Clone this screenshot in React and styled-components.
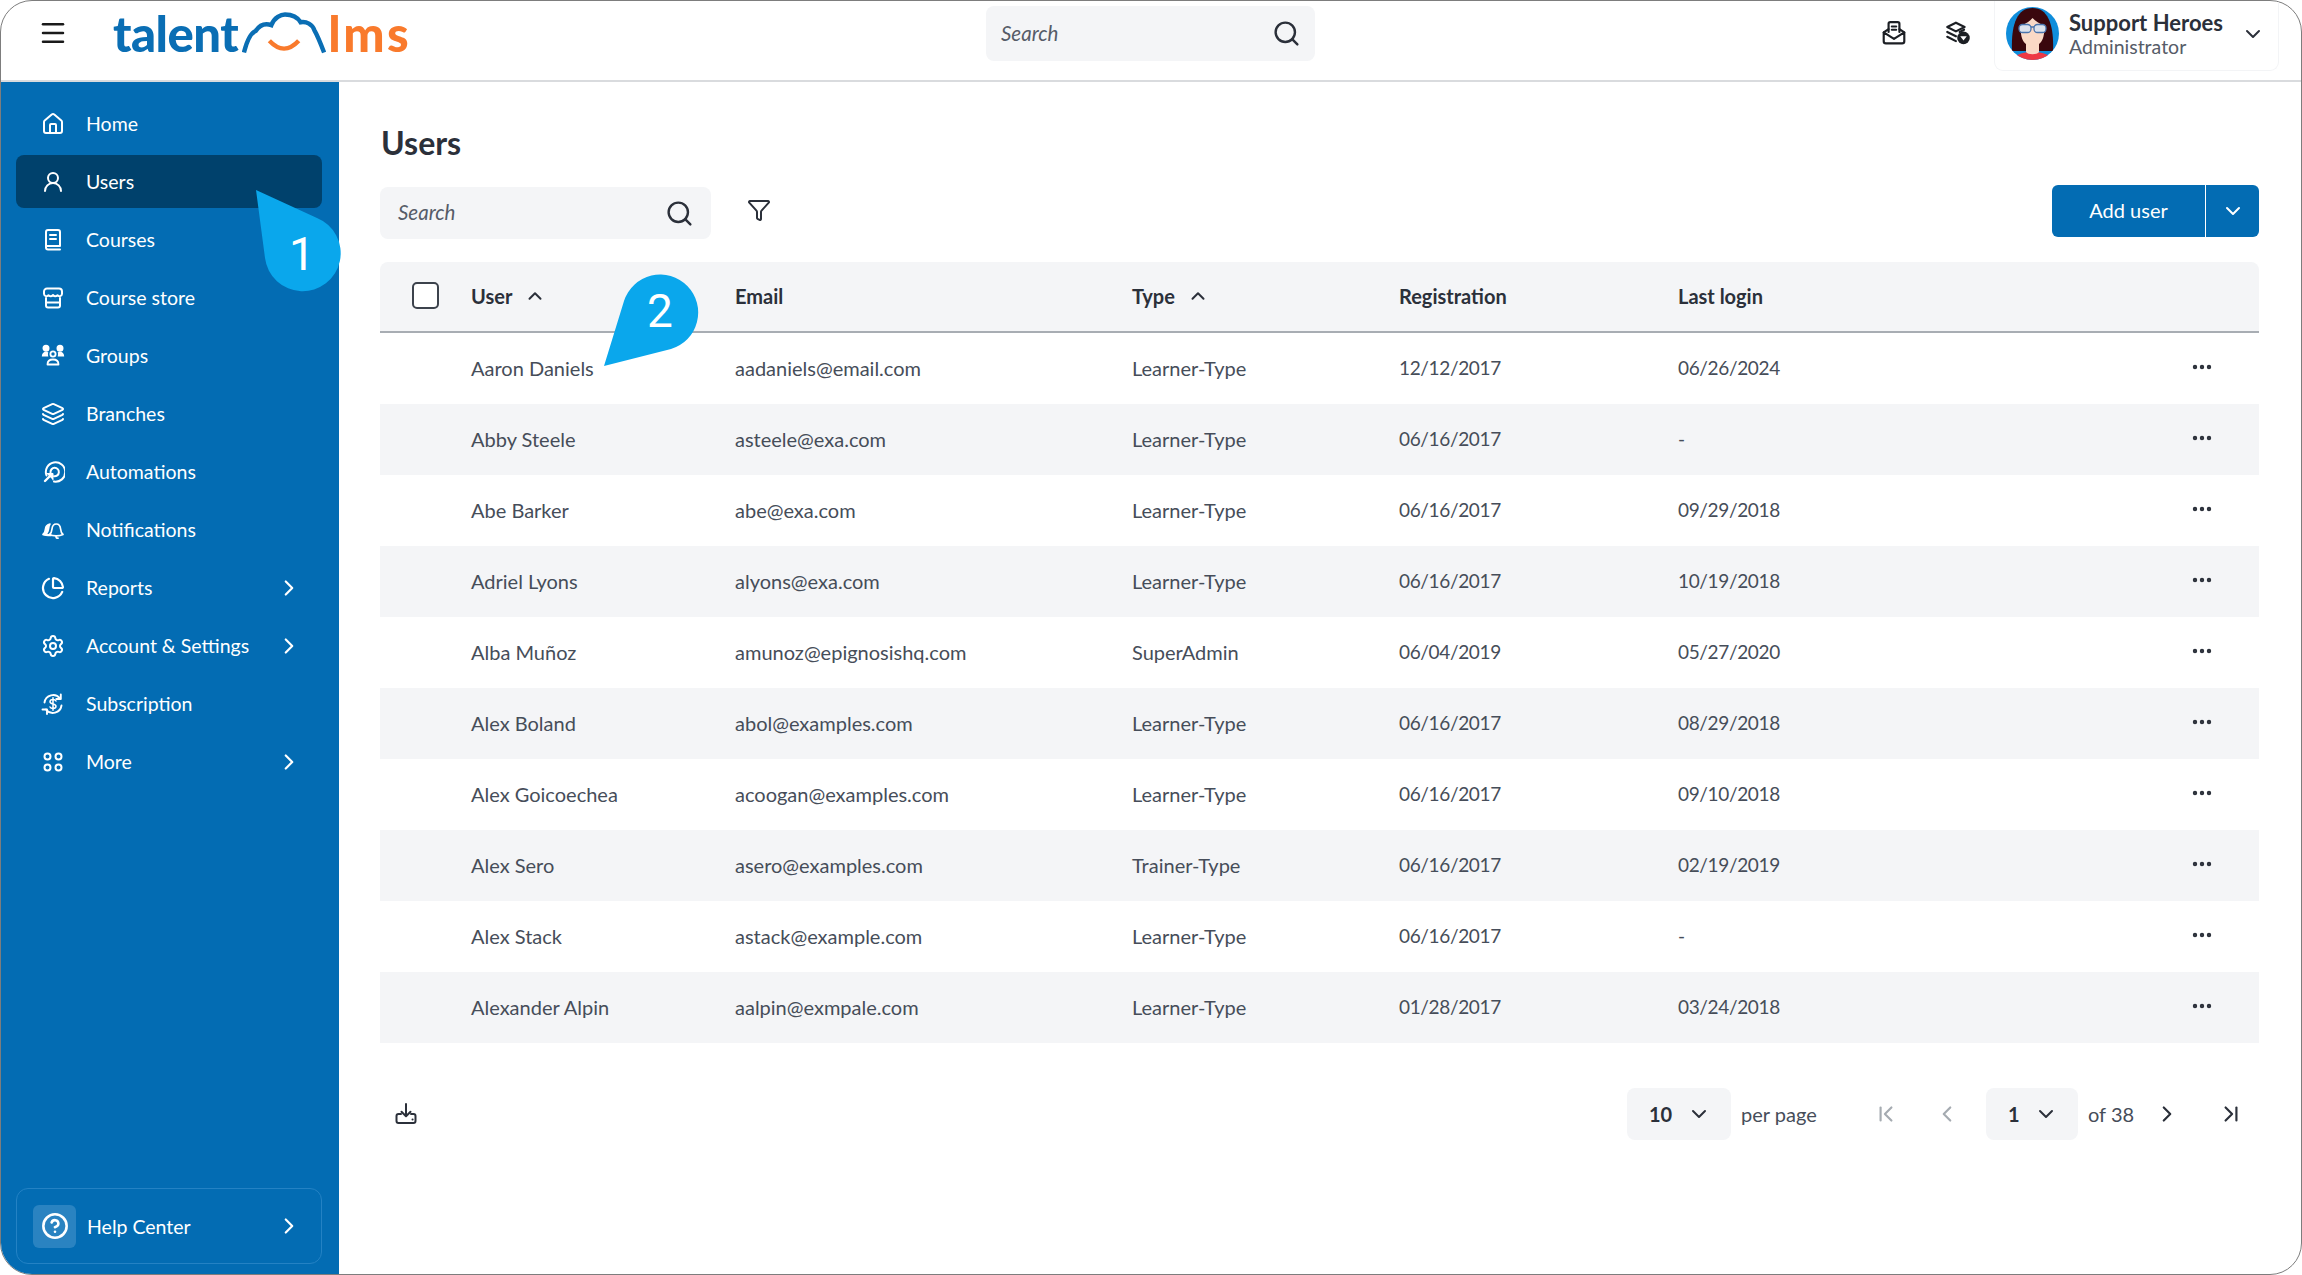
import React from "react";
import styled, { createGlobalStyle } from "styled-components";
import {
  Menu,
  House,
  UserRound,
  Layers,
  ChartPie,
  Settings,
  CircleHelp,
  ChevronRight,
  ChevronDown,
  ChevronUp,
  ChevronFirst,
  ChevronLast,
  ChevronLeft,
  Search,
  Funnel,
  Ellipsis,
} from "lucide-react";

const GlobalStyle = createGlobalStyle`
  html, body {
    margin: 0;
    background: #fff;
  }
  body {
    font-family: "Lato", "Open Sans", sans-serif;
    color: #464d59;
  }
  * {
    box-sizing: border-box;
  }
`;

const BLUE = "#036cb3";
const GREY = "#f4f5f7";
const INK = "#2b303a";

const Svg = ({ size = 24, children, ...rest }) => (
  <svg
    width={size}
    height={size}
    viewBox="0 0 24 24"
    fill="none"
    stroke="currentColor"
    strokeWidth="2"
    strokeLinecap="round"
    strokeLinejoin="round"
    {...rest}
  >
    {children}
  </svg>
);

const BookIcon = () => (
  <Svg>
    <path d="M5 18V4a2 2 0 0 1 2-2h10a2 2 0 0 1 2 2v14z" />
    <path d="M5 18v1.5A2 2 0 0 0 7 21.5h12" />
    <path d="M9 7h6M9 11h6" />
  </Svg>
);

const StoreIcon = () => (
  <Svg>
    <path d="M6 2.5h12a3 3 0 0 1 3 3V8a2.5 2.5 0 0 1-4.5 1.2A3.2 3.2 0 0 1 12 9a3.2 3.2 0 0 1-4.5.2A2.5 2.5 0 0 1 3 8V5.500a3 3 0 0 1 3-3z" />
    <path d="M5 12v7.500a2 2 0 0 0 2 2h10a2 2 0 0 0 2-2V12M5 16.500h14" />
  </Svg>
);

const GroupsIcon = () => (
  <Svg size={27} strokeWidth="1.8">
    <circle cx="12" cy="10.500" r="2.600" />
    <path d="M6.500 21c0-3 2-5 5.500-5s5.500 2 5.500 5z" />
    <circle cx="5" cy="4.800" r="2.600" fill="currentColor" />
    <circle cx="19" cy="4.800" r="2.600" fill="currentColor" />
    <path d="M0.800 13c0-3 1.800-4.800 4.200-4.800 1.200 0 1.800.3 2.300.6-.5 1.200-.4 2.500 0 4.200zM23.200 13c0-3-1.800-4.800-4.200-4.800-1.200 0-1.800.3-2.300.6.5 1.200.4 2.500 0 4.200z" fill="currentColor" stroke="none" />
  </Svg>
);

const AutomationIcon = () => (
  <Svg>
    <path d="M5.500 15.500A9.700 9.700 0 1 1 13 21.600" />
    <path d="M9.500 12.500A4.200 4.200 0 1 1 13 16.200" />
    <path d="M4 21l7-7" strokeWidth="2.400" />
    <path d="M5.500 13.500h6.500V20" fill="currentColor" strokeWidth="1" />
  </Svg>
);

const NotifyIcon = () => (
  <Svg strokeWidth="1.700">
    <path d="M10 17.500c-3 0-6.500-.3-8-1 1.800-1.500 2.300-3 2.500-5.500.2-2.500 1.800-4.500 4.500-5-1.200 1.500-1.300 3-1.500 5-.2 2.500-1.500 4.200-2.500 5z" fill="currentColor" />
    <path d="M8.500 16.500c1.800-1.400 2.300-3 2.500-5.500.3-3 2-5 4.300-5s4 2 4.300 5c.2 2.500.7 4.100 2.400 5.500-2 1-4.500 1.300-6.700 1.300s-4.800-.3-6.800-1.300z" />
    <path d="M15 18.500c0 1 .8 1.700 2 1.700" />
  </Svg>
);

const SubscriptionIcon = () => (
  <Svg strokeWidth="1.900">
    <path d="M3.500 10.500A8.700 8.700 0 0 1 19 6.500" />
    <path d="M20.500 13.500A8.700 8.700 0 0 1 5 17.500" />
    <path d="M19.800 2.500v4.500h-4.500M1.500 17.500h4.500V22" />
    <path d="M15 9c-.5-1-1.500-1.500-3-1.500-1.700 0-3 .8-3 2.200 0 3 6 1.600 6 4.600 0 1.400-1.300 2.200-3 2.200-1.500 0-2.500-.5-3-1.500M12 5.800v12.400" strokeWidth="1.500" />
  </Svg>
);

const MoreIcon = () => (
  <Svg>
    <circle cx="6.500" cy="6.500" r="3" />
    <circle cx="17.500" cy="6.500" r="3" />
    <circle cx="6.500" cy="17.500" r="3" />
    <circle cx="17.500" cy="17.500" r="3" />
  </Svg>
);

const InboxIcon = () => (
  <Svg size={26}>
    <path d="M7 11V3.500A1.500 1.500 0 0 1 8.500 2h7A1.500 1.500 0 0 1 17 3.500V11" />
    <path d="M10 6h4M10 9h4" />
    <path d="M2.500 11.500v8A2 2 0 0 0 4.500 21.500h15a2 2 0 0 0 2-2v-8l-9.500 6z" />
    <path d="M2.500 11.500L7 8.500M21.500 11.500L17 8.500" />
  </Svg>
);

const BranchShieldIcon = () => (
  <Svg size={26}>
    <path d="M11 2.500l8 4-8 4-8-4z" />
    <path d="M3 11l8 4M3 15.500l8 4" />
    <path d="M14.500 11l4-2" />
    <circle cx="18" cy="16.500" r="5.800" fill="currentColor" stroke="none" />
    <path d="M15 15h6l-3 4z" fill="#fff" stroke="none" />
  </Svg>
);

const DownloadIcon = () => (
  <Svg>
    <path d="M12 2v12M7.500 9.800L12 14.300l4.500-4.500" />
    <path d="M7 12H4.500A2 2 0 0 0 2.500 14v5a2 2 0 0 0 2 2h15a2 2 0 0 0 2-2v-5a2 2 0 0 0-2-2H17" />
    <path d="M18.500 17.500h.1" />
  </Svg>
);

const CloudMark = () => (
  <CloudSvg viewBox="0 0 88 44">
    <path
      d="M2 42C5 30 9 22 14 20C18 14 24 12 30 14C33 6 40 3 44 3C52 3 57 6 60 11C66 10 72 13 74 19C78 26 81 34 84 42"
      fill="none"
      stroke="#0a6eb4"
      strokeWidth="4.500"
    />
    <path d="M28 30Q43 46 58 30" fill="none" stroke="#f97a2c" strokeWidth="4.500" />
  </CloudSvg>
);

const AvatarArt = () => (
  <AvatarSvg viewBox="0 0 53 53">
    <defs>
      <clipPath id="avatar-clip">
        <circle cx="26.500" cy="26.500" r="26.500" />
      </clipPath>
    </defs>
    <g clipPath="url(#avatar-clip)">
      <rect width="53" height="53" fill="#0f8ddb" />
      <path d="M6 44C5 20 10 1 26.500 1S48 20 47 44z" fill="#3a070d" />
      <path d="M6 53c2-5 10-8 20.500-8S45 48 47 53z" fill="#ee3944" />
      <path d="M15 18c5-1 9-4 11.500-7 3 3 7 6 11.500 7 1 9-1 16-5 19v8c-2 3-11 3-13 0v-8c-4-3-6-10-5-19z" fill="#fad9c6" />
      <rect x="13" y="17.500" width="12" height="8" rx="3.500" fill="#dde2ec" stroke="#4a74ad" strokeWidth="1.300" />
      <rect x="28" y="17.500" width="12" height="8" rx="3.500" fill="#dde2ec" stroke="#4a74ad" strokeWidth="1.300" />
      <path d="M25 20h3" stroke="#4a74ad" strokeWidth="1.300" />
    </g>
  </AvatarSvg>
);

const NAV = [
  { label: "Home", icon: <House size={24} strokeWidth={2} /> },
  { label: "Users", icon: <UserRound size={24} strokeWidth={2} />, active: true },
  { label: "Courses", icon: <BookIcon /> },
  { label: "Course store", icon: <StoreIcon /> },
  { label: "Groups", icon: <GroupsIcon /> },
  { label: "Branches", icon: <Layers size={24} strokeWidth={2} /> },
  { label: "Automations", icon: <AutomationIcon /> },
  { label: "Notifications", icon: <NotifyIcon /> },
  { label: "Reports", icon: <ChartPie size={24} strokeWidth={2.2} />, more: true },
  { label: "Account & Settings", icon: <Settings size={24} strokeWidth={2} />, more: true },
  { label: "Subscription", icon: <SubscriptionIcon /> },
  { label: "More", icon: <MoreIcon />, more: true },
];

const USERS = [
  { name: "Aaron Daniels", email: "aadaniels@email.com", type: "Learner-Type", joined: "12/12/2017", login: "06/26/2024" },
  { name: "Abby Steele", email: "asteele@exa.com", type: "Learner-Type", joined: "06/16/2017", login: "-" },
  { name: "Abe Barker", email: "abe@exa.com", type: "Learner-Type", joined: "06/16/2017", login: "09/29/2018" },
  { name: "Adriel Lyons", email: "alyons@exa.com", type: "Learner-Type", joined: "06/16/2017", login: "10/19/2018" },
  { name: "Alba Muñoz", email: "amunoz@epignosishq.com", type: "SuperAdmin", joined: "06/04/2019", login: "05/27/2020" },
  { name: "Alex Boland", email: "abol@examples.com", type: "Learner-Type", joined: "06/16/2017", login: "08/29/2018" },
  { name: "Alex Goicoechea", email: "acoogan@examples.com", type: "Learner-Type", joined: "06/16/2017", login: "09/10/2018" },
  { name: "Alex Sero", email: "asero@examples.com", type: "Trainer-Type", joined: "06/16/2017", login: "02/19/2019" },
  { name: "Alex Stack", email: "astack@example.com", type: "Learner-Type", joined: "06/16/2017", login: "-" },
  { name: "Alexander Alpin", email: "aalpin@exmpale.com", type: "Learner-Type", joined: "01/28/2017", login: "03/24/2018" },
];

const App = () => {
  return (
    <Frame>
      <GlobalStyle />
      <TopBar>
        <LeftGroup>
          <MenuButton>
            <Menu size={30} strokeWidth={2} />
          </MenuButton>
          <Logo>
            <LogoWord>talent</LogoWord>
            <CloudMark />
            <LogoWord $orange>lms</LogoWord>
          </Logo>
        </LeftGroup>
        <TopSearch>
          <SearchLabel>Search</SearchLabel>
          <Search size={29} strokeWidth={2} color={INK} />
        </TopSearch>
        <RightGroup>
          <TopIcon>
            <InboxIcon />
          </TopIcon>
          <TopIcon>
            <BranchShieldIcon />
          </TopIcon>
          <ProfileCard>
            <AvatarArt />
            <ProfileText>
              <ProfileName>Support Heroes</ProfileName>
              <ProfileRole>Administrator</ProfileRole>
            </ProfileText>
            <ProfileChevron>
              <ChevronDown size={24} strokeWidth={2} />
            </ProfileChevron>
          </ProfileCard>
        </RightGroup>
      </TopBar>

      <Body>
        <Sidebar>
          <NavList>
            {NAV.map((item) => (
              <NavItem key={item.label} $active={item.active}>
                <NavIcon>{item.icon}</NavIcon>
                <NavLabel>{item.label}</NavLabel>
                {item.more && (
                  <NavMore>
                    <ChevronRight size={26} strokeWidth={2} />
                  </NavMore>
                )}
              </NavItem>
            ))}
          </NavList>
          <HelpCard>
            <HelpTile>
              <CircleHelp size={28} strokeWidth={2.2} />
            </HelpTile>
            <HelpLabel>Help Center</HelpLabel>
            <NavMore>
              <ChevronRight size={26} strokeWidth={2} />
            </NavMore>
          </HelpCard>
        </Sidebar>

        <Main>
          <PageTitle>Users</PageTitle>
          <Toolbar>
            <ListSearch>
              <SearchLabel>Search</SearchLabel>
              <Search size={29} strokeWidth={2} color={INK} />
            </ListSearch>
            <FilterButton>
              <Funnel size={24} strokeWidth={2} />
            </FilterButton>
            <SplitButton>
              <AddUser>Add user</AddUser>
              <AddCaret>
                <ChevronDown size={24} strokeWidth={2} />
              </AddCaret>
            </SplitButton>
          </Toolbar>

          <Table>
            <HeadRow>
              <CheckCell>
                <Checkbox />
              </CheckCell>
              <HeadCell>
                User <ChevronUp size={22} strokeWidth={2.2} />
              </HeadCell>
              <HeadCell>Email</HeadCell>
              <HeadCell>
                Type <ChevronUp size={22} strokeWidth={2.2} />
              </HeadCell>
              <HeadCell>Registration</HeadCell>
              <HeadCell>Last login</HeadCell>
              <span />
            </HeadRow>
            {USERS.map((user, i) => (
              <UserRow key={user.email} $striped={i % 2 === 1}>
                <span />
                <span>{user.name}</span>
                <span>{user.email}</span>
                <span>{user.type}</span>
                <DateCell>{user.joined}</DateCell>
                <DateCell>{user.login}</DateCell>
                <RowMenu>
                  <Ellipsis size={24} strokeWidth={2.4} />
                </RowMenu>
              </UserRow>
            ))}
          </Table>

          <Footer>
            <ExportButton>
              <DownloadIcon />
            </ExportButton>
            <Pager>
              <PageSelect $width={104}>
                <strong>10</strong>
                <ChevronDown size={24} strokeWidth={2} />
              </PageSelect>
              <PagerText $width={75}>per page</PagerText>
              <PageButton $disabled $gap={46}>
                <ChevronFirst size={26} strokeWidth={2} />
              </PageButton>
              <PageButton $disabled $gap={13}>
                <ChevronLeft size={26} strokeWidth={2} />
              </PageButton>
              <PageSelect $width={92} $gap={15}>
                <strong>1</strong>
                <ChevronDown size={24} strokeWidth={2} />
              </PageSelect>
              <PagerText $width={44}>of 38</PagerText>
              <PageButton $gap={11}>
                <ChevronRight size={26} strokeWidth={2} />
              </PageButton>
              <PageButton $gap={16}>
                <ChevronLast size={26} strokeWidth={2} />
              </PageButton>
            </Pager>
          </Footer>
        </Main>
      </Body>

      <Callout $left={250} $top={185} $width={95} $height={110}>
        <svg width="95" height="110" viewBox="0 0 95 110">
          <path d="M5 4L66 32A38 38 0 1 1 14 72Z" fill="#0aa7ec" />
        </svg>
        <CalloutNumber $x={51} $y={68}>1</CalloutNumber>
      </Callout>
      <Callout $left={598} $top={268} $width={106} $height={102}>
        <svg width="106" height="102" viewBox="0 0 106 102">
          <path d="M5 97L25 32A38 38 0 1 1 72 80Z" fill="#0aa7ec" />
        </svg>
        <CalloutNumber $x={61} $y={42}>2</CalloutNumber>
      </Callout>
    </Frame>
  );
};

export default App;

const Frame = styled.div`
  position: relative;
  display: flex;
  flex-direction: column;
  width: 2302px;
  height: 1275px;
  border: 1.5px solid #7d7d7d;
  border-radius: 32px;
  overflow: hidden;
  background: #fff;
`;

const TopBar = styled.header`
  display: flex;
  align-items: center;
  flex: none;
  height: 81px;
  padding-left: 42px;
  padding-right: 22px;
  border-bottom: 2px solid #d9dbde;
`;

const LeftGroup = styled.div`
  display: flex;
  align-items: center;
  align-self: flex-start;
  width: 943px;
  height: 64px;
`;

const MenuButton = styled.div`
  display: flex;
  width: 30px;
  margin-left: -5px;
  margin-right: 45px;
  color: #1a1a1a;
`;

const Logo = styled.div`
  display: flex;
  align-items: flex-end;
  height: 44px;
`;

const LogoWord = styled.span`
  font-size: 49px;
  line-height: 44px;
  font-weight: 900;
  letter-spacing: ${(p) => (p.$orange ? "2.5px" : "-0.5px")};
  color: ${(p) => (p.$orange ? "#f97a2c" : "#0a6eb4")};
`;

const CloudSvg = styled.svg`
  width: 86px;
  height: 44px;
  margin: 0 0 0 4px;
`;

const TopSearch = styled.div`
  display: flex;
  align-items: center;
  justify-content: space-between;
  align-self: flex-start;
  width: 329px;
  height: 55px;
  margin-top: 5px;
  padding: 0 14px 0 15px;
  border-radius: 8px;
  background: ${GREY};
`;

const SearchLabel = styled.span`
  padding-bottom: 2px;
  font-size: 20.5px;
  font-style: italic;
  color: #565c68;
`;

const RightGroup = styled.div`
  display: flex;
  align-items: center;
  align-self: flex-start;
  margin-left: auto;
`;

const TopIcon = styled.div`
  display: flex;
  justify-content: center;
  width: 32px;
  margin-top: -7px;
  margin-right: 31px;
  color: #1c1f24;

  &:nth-child(2) {
    margin-right: 21px;
  }
`;

const ProfileCard = styled.div`
  display: flex;
  align-items: center;
  width: 285px;
  height: 70px;
  padding: 0 0 4px 11px;
  border: 1px solid #f3f4f6;
  border-top: none;
  border-radius: 0 0 9px 9px;
`;

const AvatarSvg = styled.svg`
  flex: none;
  width: 53px;
  height: 53px;
`;

const ProfileText = styled.div`
  display: flex;
  flex-direction: column;
  margin-left: 10px;
`;

const ProfileName = styled.span`
  font-size: 22px;
  line-height: 25px;
  font-weight: 700;
  color: ${INK};
`;

const ProfileRole = styled.span`
  font-size: 19.5px;
  line-height: 23px;
  color: #565c68;
`;

const ProfileChevron = styled.div`
  display: flex;
  margin-left: auto;
  padding-right: 13px;
  color: ${INK};
`;

const Body = styled.div`
  display: flex;
  flex: 1;
  min-height: 0;
`;

const Sidebar = styled.aside`
  display: flex;
  flex-direction: column;
  flex: none;
  width: 338px;
  padding: 15px 17px 10px 15px;
  background: ${BLUE};
  color: #fff;
`;

const NavList = styled.nav`
  display: flex;
  flex-direction: column;
  gap: 5px;
`;

const NavItem = styled.div`
  display: flex;
  align-items: center;
  height: 53px;
  padding: 0 20px 0 25px;
  border-radius: 8px;
  background: ${(p) => (p.$active ? "#00416c" : "transparent")};
`;

const NavIcon = styled.span`
  display: flex;
  flex: none;
  align-items: center;
  justify-content: center;
  width: 24px;
  margin-right: 21px;
`;

const NavLabel = styled.span`
  font-size: 19.5px;
  white-space: nowrap;
`;

const NavMore = styled.span`
  display: flex;
  margin-left: auto;
`;

const HelpCard = styled.div`
  display: flex;
  align-items: center;
  height: 76px;
  margin-top: auto;
  padding: 0 19px 0 16px;
  border: 1px solid #2482c4;
  border-radius: 12px;
`;

const HelpTile = styled.span`
  display: flex;
  align-items: center;
  justify-content: center;
  width: 43px;
  height: 43px;
  border-radius: 6px;
  background: #2a83c1;
`;

const HelpLabel = styled.span`
  margin-left: 11px;
  font-size: 19.5px;
`;

const Main = styled.main`
  flex: 1;
  min-width: 0;
  padding: 41px 42px 0 41px;
`;

const PageTitle = styled.h1`
  margin: 0 0 0 1px;
  font-size: 32px;
  line-height: 40px;
  font-weight: 700;
  color: ${INK};
`;

const Toolbar = styled.div`
  display: flex;
  align-items: flex-start;
  height: 54px;
  margin-top: 22px;
`;

const ListSearch = styled.div`
  display: flex;
  align-items: center;
  justify-content: space-between;
  width: 331px;
  height: 52px;
  margin-top: 2px;
  padding: 0 17px 0 18px;
  border-radius: 8px;
  background: ${GREY};
`;

const FilterButton = styled.div`
  display: flex;
  margin: 13px 0 0 36px;
  color: ${INK};
`;

const SplitButton = styled.div`
  display: flex;
  width: 207px;
  height: 52px;
  margin-left: auto;
  border-radius: 6px;
  overflow: hidden;
  background: ${BLUE};
  color: #fff;
`;

const AddUser = styled.div`
  display: flex;
  align-items: center;
  justify-content: center;
  width: 154px;
  padding-bottom: 2px;
  font-size: 20px;
  border-right: 1.5px solid #fff;
`;

const AddCaret = styled.div`
  display: flex;
  flex: 1;
  align-items: center;
  justify-content: center;
`;

const Table = styled.div`
  margin-top: 23px;
`;

const columns = "91px 264px 397px 267px 279px 1fr 80px";

const HeadRow = styled.div`
  display: grid;
  grid-template-columns: ${columns};
  align-items: center;
  height: 71px;
  padding-bottom: 2px;
  border-bottom: 2px solid #a8adb3;
  border-radius: 8px 8px 0 0;
  background: ${GREY};
`;

const CheckCell = styled.span`
  display: flex;
  padding-left: 32px;
`;

const Checkbox = styled.span`
  width: 27px;
  height: 27px;
  border: 2px solid #3c424c;
  border-radius: 5px;
  background: #fff;
`;

const HeadCell = styled.span`
  display: flex;
  align-items: center;
  gap: 12px;
  font-size: 20px;
  font-weight: 700;
  color: ${INK};
`;

const UserRow = styled.div`
  display: grid;
  grid-template-columns: ${columns};
  align-items: center;
  height: 71px;
  padding-bottom: 2px;
  font-size: 20px;
  background: ${(p) => (p.$striped ? GREY : "#fff")};
`;

const DateCell = styled.span`
  font-size: 19px;
  letter-spacing: -0.35px;
`;

const RowMenu = styled.span`
  display: flex;
  justify-content: flex-end;
  padding: 0 45px 2px 0;
  color: ${INK};
`;

const Footer = styled.div`
  display: flex;
  align-items: center;
  justify-content: space-between;
  height: 52px;
  margin-top: 45px;
`;

const ExportButton = styled.div`
  display: flex;
  margin-left: 14px;
  color: ${INK};
`;

const Pager = styled.div`
  display: flex;
  align-items: center;
  padding-right: 4px;
`;

const PageSelect = styled.div`
  display: flex;
  align-items: center;
  justify-content: space-between;
  width: ${(p) => p.$width}px;
  height: 52px;
  margin-left: ${(p) => p.$gap || 0}px;
  padding: 0 20px 0 22px;
  border-radius: 8px;
  background: ${GREY};
  color: ${INK};
  font-size: 20px;
`;

const PagerText = styled.span`
  width: ${(p) => p.$width}px;
  margin-left: 10px;
  font-size: 20px;
  white-space: nowrap;
`;

const PageButton = styled.div`
  display: flex;
  align-items: center;
  justify-content: center;
  width: 48px;
  height: 48px;
  margin-left: ${(p) => p.$gap}px;
  color: ${(p) => (p.$disabled ? "#a5abb1" : INK)};
`;

const Callout = styled.div`
  position: absolute;
  left: ${(p) => p.$left}px;
  top: ${(p) => p.$top}px;
  width: ${(p) => p.$width}px;
  height: ${(p) => p.$height}px;
`;

const CalloutNumber = styled.span`
  position: absolute;
  left: ${(p) => p.$x}px;
  top: ${(p) => p.$y}px;
  transform: translate(-50%, -50%);
  font-family: "Roboto", sans-serif;
  font-size: 46px;
  font-weight: 400;
  line-height: 1;
  color: #fff;
`;
